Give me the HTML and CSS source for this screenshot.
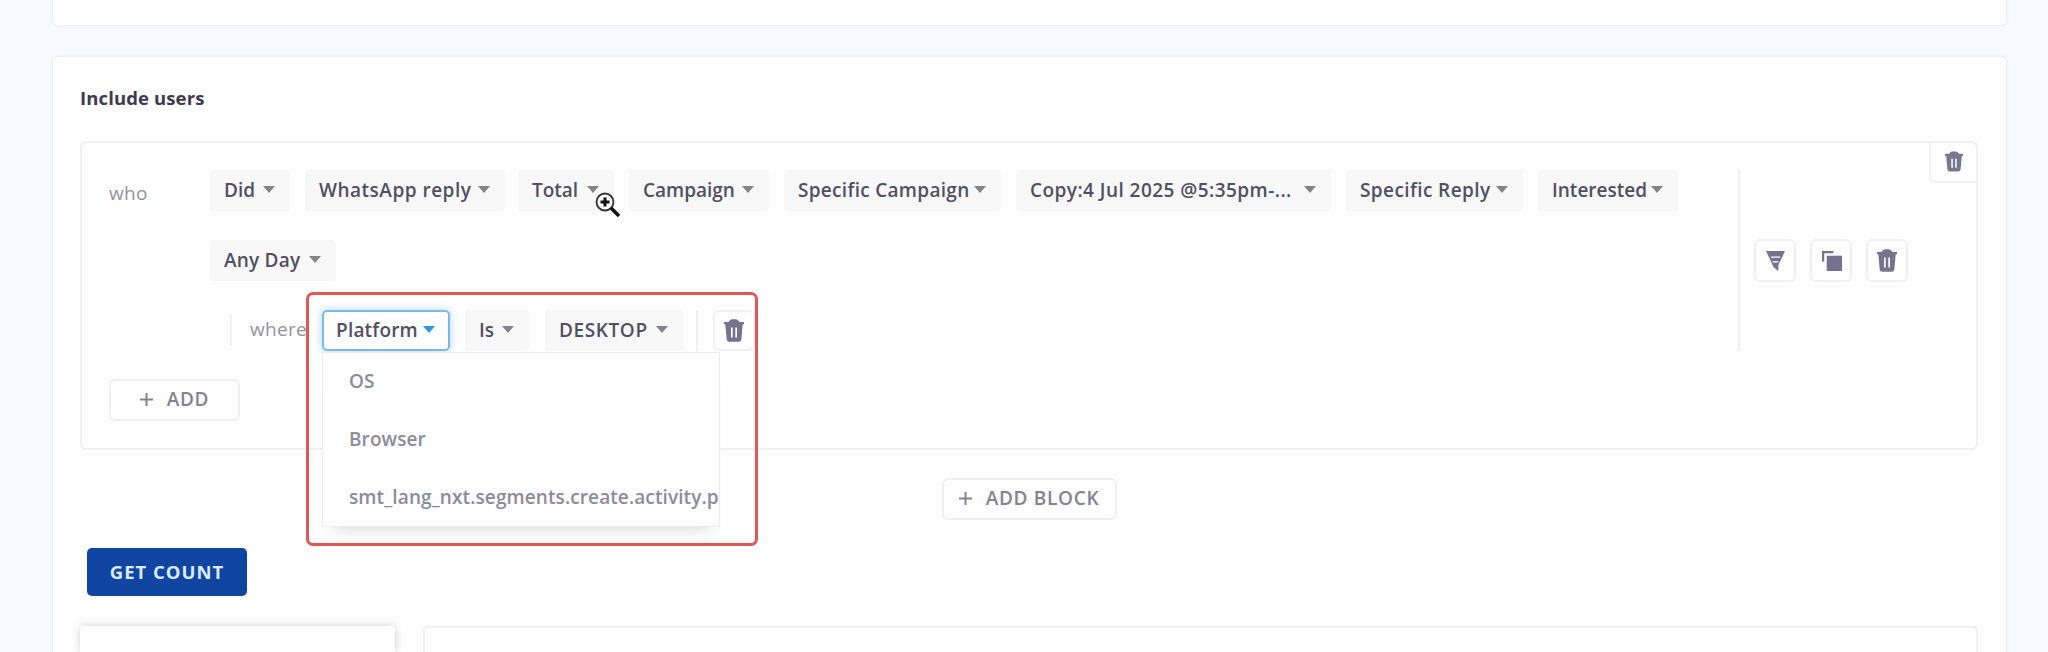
FILE: index.html
```html
<!DOCTYPE html>
<html lang="en">
<head>
    <meta charset="UTF-8">
    <meta name="viewport" content="width=device-width, initial-scale=1.0">
    <title>Create segment</title>
    <link rel="stylesheet" href="styles.css">
</head>
<body>
    <!-- shared icons -->
    <svg class="sprite" width="0" height="0">
        <symbol id="trash" viewBox="0 0 20 23">
            <path fill="currentColor" fill-rule="evenodd" d="M0 3h4.500Q6 .3 8 .3h4q2 0 3.500 2.700H20v2.300h-1.300L17.300 20.500q-.3 2.200-2.500 2.200H5.200Q3 22.700 2.700 20.500L1.300 5.300H0zM7 8.500v10h1.700v-10zM11.300 8.500v10H13v-10z"/>
        </symbol>
    </svg>

    <div class="card card-top"></div>

    <div class="card card-main">
        <h2>Include users</h2>

        <div class="block">
            <button class="block-delete"><svg class="icon-trash small"><use href="#trash"/></svg></button>

            <div class="rule">
                <span class="who">who</span>
                <div class="conditions">
                    <div class="chips">
                        <button class="chip w-did"><span>Did</span></button>
                        <button class="chip w-reply"><span>WhatsApp reply</span></button>
                        <button class="chip w-total"><span>Total</span></button>
                        <button class="chip w-campaign"><span>Campaign</span></button>
                        <button class="chip w-specific"><span>Specific Campaign</span></button>
                        <button class="chip w-copy"><span>Copy:4 Jul 2025 @5:35pm-...</span></button>
                        <button class="chip w-sreply"><span>Specific Reply</span></button>
                        <button class="chip w-interested"><span>Interested</span></button>
                        <button class="chip w-day"><span>Any Day</span></button>
                    </div>

                    <div class="where-row">
                        <span class="where">where</span>
                        <div class="select">
                            <button class="chip active w-platform"><span>Platform</span></button>
                            <div class="menu">
                                <div class="item">OS</div>
                                <div class="item">Browser</div>
                                <div class="item">smt_lang_nxt.segments.create.activity.p</div>
                            </div>
                            <div class="highlight"></div>
                        </div>
                        <button class="chip w-is"><span>Is</span></button>
                        <button class="chip w-desktop"><span>DESKTOP</span></button>
                        <div class="where-delete">
                            <button class="icon-btn"><svg class="icon-trash"><use href="#trash"/></svg></button>
                        </div>
                    </div>
                </div>

                <div class="actions">
                    <button class="icon-btn">
                        <svg width="19" height="20" viewBox="0 0 20 21">
                            <path fill="currentColor" d="M0 0h20l-7 15v6l-5-4z"/>
                            <path stroke="#fff" stroke-width="1.400" d="M5 6.500h10M7 11.500h6"/>
                        </svg>
                    </button>
                    <button class="icon-btn">
                        <svg width="21" height="21" viewBox="0 0 22 22">
                            <path fill="none" stroke="currentColor" stroke-width="2.400" d="M2.200 12V2.200H13"/>
                            <path fill="currentColor" d="M6 6h16v16H6z"/>
                        </svg>
                    </button>
                    <button class="icon-btn"><svg class="icon-trash"><use href="#trash"/></svg></button>
                </div>
            </div>

            <button class="outline-btn add">
                <svg width="13" height="13" viewBox="0 0 13 13"><path stroke="currentColor" stroke-width="2" d="M6.500 0v13M0 6.500h13"/></svg>
                <span>ADD</span>
            </button>
        </div>

        <button class="outline-btn add-block">
            <svg width="13" height="13" viewBox="0 0 13 13"><path stroke="currentColor" stroke-width="2" d="M6.500 0v13M0 6.500h13"/></svg>
            <span>ADD BLOCK</span>
        </button>

        <button class="primary">GET COUNT</button>

        <div class="panels">
            <div class="panel panel-left"></div>
            <div class="panel"></div>
        </div>
    </div>

    <!-- zoom pointer -->
    <svg class="pointer" width="28" height="28" viewBox="0 0 28 28">
        <path stroke="#fff" stroke-width="7" d="M15 15l9 9"/>
        <circle cx="10" cy="10" r="8.500" fill="#fff" stroke="#333" stroke-width="1.800"/>
        <path stroke="#111" stroke-width="3" d="M10 5.500v9M5.500 10h9"/>
        <path stroke="#111" stroke-width="3.500" d="M16 16l8 8"/>
    </svg>
</body>
</html>
```
FILE: styles.css
```css
* {
    box-sizing: border-box;
}

body {
    margin: 0;
    height: 652px;
    overflow: hidden;
    background: #f6f9fd;
    font-family: "Open Sans", "Noto Sans", sans-serif;
    font-size: 19px;
    color: #514f62;
    padding-left: 52px;
}

button {
    font: inherit;
    color: inherit;
    background: none;
    border: none;
    padding: 0;
}

.sprite {
    position: absolute;
}

.card {
    width: 1955px;
    background: #fefefe;
    border: 1px solid #edf0f4;
    border-radius: 6px;
    box-shadow: 0 0 3px rgba(60, 80, 110, 0.06);
}

.card-top {
    height: 26px;
    border-top: none;
    border-radius: 0 0 6px 6px;
    margin-bottom: 30px;
}

/* runs to the bottom of the window */
.card-main {
    height: 596px;
    padding: 27px 28px 0 27px;
    border-bottom: none;
    border-radius: 6px 6px 0 0;
}

h2 {
    margin: 0 0 29px;
    font-size: 18.500px;
    line-height: 28px;
    font-weight: 700;
    letter-spacing: 0.12px;
    color: #3d3a50;
}

.block {
    position: relative;
    height: 309px;
    padding: 27px 0 0 27px;
    border: 2px solid #f1f1f3;
    border-radius: 6px;
}

/* delete button sits in the corner of the block */
.block-delete {
    position: absolute;
    top: -2px;
    right: -2px;
    width: 49px;
    height: 42px;
    border: 2px solid #f1f1f3;
    border-radius: 0 6px 0 6px;
    display: flex;
    align-items: center;
    justify-content: center;
    padding-bottom: 2px;
    color: #7a7791;
}

.rule {
    display: flex;
}

.who {
    width: 101px;
    padding-top: 9px;
    line-height: 28px;
    font-weight: 500;
    letter-spacing: 0.3px;
    color: #93929b;
}

.conditions {
    width: 1530px;
    height: 181px;
    border-right: 2px solid #f0f0f3;
}

.chips {
    display: flex;
    flex-wrap: wrap;
    gap: 29px 15px;
}

.chip {
    height: 41px;
    padding: 0 15px 2px 14px;
    background: #f8f8f9;
    border-radius: 4px;
    display: flex;
    align-items: center;
    justify-content: space-between;
    white-space: nowrap;
    font-weight: 550;
}

.chip::after {
    content: "";
    border: 6.500px solid transparent;
    border-top: 7px solid #858389;
    border-bottom: none;
}

.w-did { width: 80px; }
.w-reply { width: 200px; margin-right: -2px; letter-spacing: 0.5px; }
.w-total { width: 96px; }
.w-campaign { width: 140px; }
.w-specific { width: 217px; letter-spacing: 0.3px; }
.w-copy { width: 315px; letter-spacing: 0.45px; }
.w-sreply { width: 177px; letter-spacing: 0.4px; }
.w-interested { width: 140px; }
.w-day { width: 126px; letter-spacing: 0.2px; }
.w-platform { width: 128px; letter-spacing: 0.2px; }
.w-is { width: 64px; }
.w-desktop { width: 138px; letter-spacing: 0.6px; }

.where-row {
    display: flex;
    margin: 29px 0 0 20px;
}

.where {
    width: 92px;
    height: 31px;
    margin-top: 5px;
    padding-left: 18px;
    border-left: 2px solid #f2f2f4;
    line-height: 28px;
    font-weight: 500;
    letter-spacing: 0.3px;
    color: #93929b;
}

.select {
    position: relative;
    margin-right: 15px;
}

.chip.active {
    background: #fff;
    border: 2px solid #7db8f0;
    border-radius: 5px;
    padding: 0 13px 2px 12px;
    box-shadow: 0 0 6px 2px #cfe6fc;
}

.chip.active::after {
    border-top-color: #2f93e6;
}

.w-is {
    margin-right: 16px;
}

.menu {
    position: absolute;
    z-index: 2;
    top: 42px;
    left: 0;
    width: 398px;
    height: 175px;
    background: #fefefe;
    border: 1px solid #ececef;
    box-shadow: 0 14px 14px -12px rgba(60, 70, 70, 0.2);
}

.item {
    height: 58px;
    line-height: 57px;
    padding-left: 26px;
    white-space: nowrap;
    font-weight: 600;
    letter-spacing: 0.1px;
    color: #8d8b99;
}

.highlight {
    position: absolute;
    z-index: 3;
    top: -18px;
    left: -16px;
    width: 452px;
    height: 254px;
    border: 3px solid #e35656;
    border-radius: 7px;
    pointer-events: none;
}

.where-delete {
    margin-left: 13px;
    padding-left: 15px;
    border-left: 2px solid #f0f0f3;
}

.icon-btn {
    width: 42px;
    height: 43px;
    border: 2px solid #f1f1f5;
    border-radius: 6px;
    display: flex;
    align-items: center;
    justify-content: center;
    color: #77738f;
}

.where-delete .icon-btn {
    height: 41px;
}

.icon-trash {
    width: 20px;
    height: 23px;
}

.icon-trash.small {
    width: 18px;
    height: 21px;
}

.actions {
    display: flex;
    gap: 14px;
    margin: 69px 0 0 14px;
}

.outline-btn {
    display: flex;
    align-items: center;
    justify-content: center;
    gap: 14px;
    height: 42px;
    padding-bottom: 2px;
    border: 2px solid #f0f0f3;
    border-radius: 6px;
    color: #85838f;
    font-weight: 550;
    letter-spacing: 0.7px;
}

.add {
    width: 131px;
    margin-top: 28px;
}

.add-block {
    width: 175px;
    margin: 28px auto 0;
}

.primary {
    display: block;
    width: 160px;
    height: 48px;
    margin: 28px 0 30px 7px;
    padding-bottom: 2px;
    border-radius: 5px;
    background: #1046a1;
    color: #dceaff;
    font-weight: 700;
    font-size: 18.500px;
    letter-spacing: 1px;
}

.panels {
    display: flex;
    gap: 28px;
}

.panel {
    flex: 1;
    height: 26px;
    border: 2px solid #f2f2f3;
    border-bottom: none;
    border-radius: 4px 4px 0 0;
}

.panel-left {
    flex: 0 0 315px;
    border: none;
    background: #fff;
    box-shadow: 0 0 8px rgba(0, 0, 0, 0.18);
}

.pointer {
    position: absolute;
    left: 595px;
    top: 192px;
}
```
